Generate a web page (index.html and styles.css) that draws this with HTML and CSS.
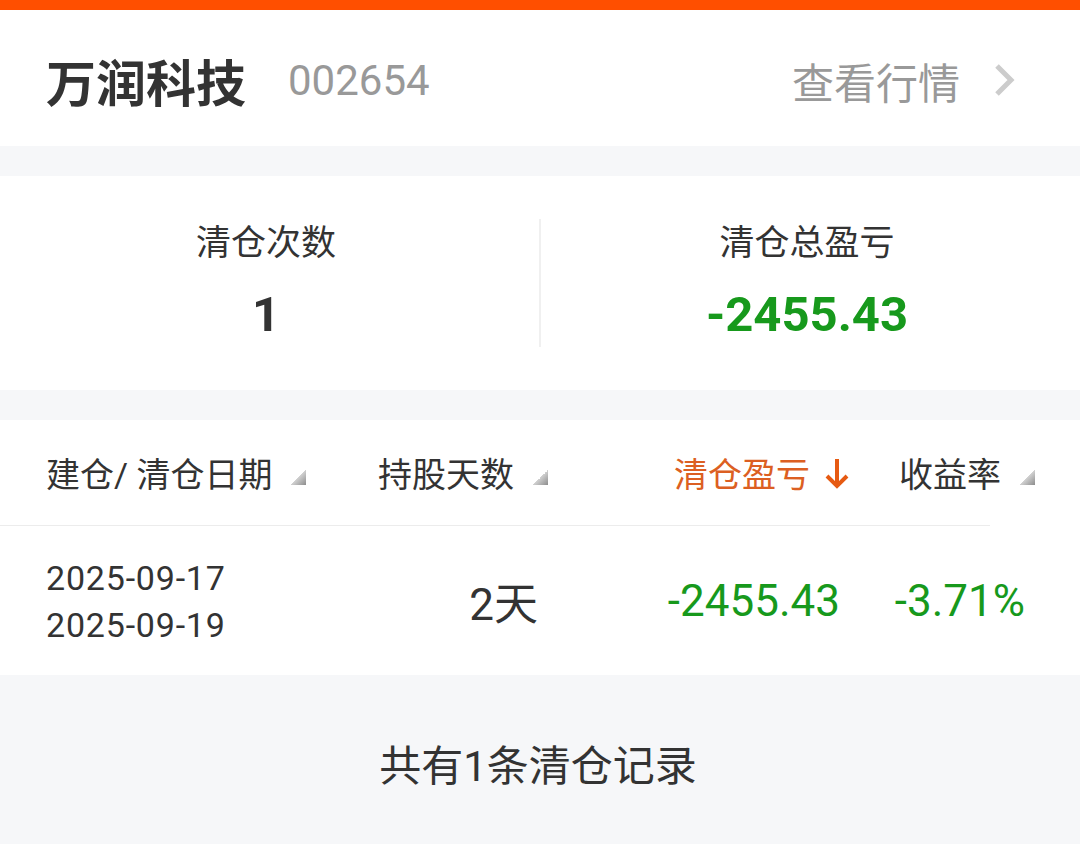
FILE: index.html
```html
<!DOCTYPE html>
<html>
    <head>
        <title>清仓记录</title>
        <meta charset="UTF-8">
        <link rel="stylesheet" href="styles.css">
    </head>
    <body>
        <div class="topbar"></div>
        <div class="head">
            <span class="name">万润科技</span>
            <span class="code">002654</span>
            <a class="more" href="#">
                查看行情
                <svg class="chev" width="26" height="36" viewBox="0 0 26 36">
                    <polyline points="5,4 19,18 5,32" fill="none" stroke="#cccccc" stroke-width="5"/>
                </svg>
            </a>
        </div>

        <div class="summary">
            <div class="stat">
                <div class="label">清仓次数</div>
                <div class="value">1</div>
            </div>
            <div class="stat">
                <div class="label">清仓总盈亏</div>
                <div class="value green">-2455.43</div>
            </div>
        </div>

        <div class="table">
            <div class="thead">
                <div class="th th-left">建仓/ 清仓日期<i class="sort"></i></div>
                <div class="th">持股天数<i class="sort"></i></div>
                <div class="th active">清仓盈亏
                    <svg class="arrow" width="26" height="32" viewBox="0 0 26 32">
                        <line x1="13" y1="2" x2="13" y2="29" stroke="#e65a12" stroke-width="4"/>
                        <polyline points="3,19 13,29 23,19" fill="none" stroke="#e65a12" stroke-width="4"/>
                    </svg>
                </div>
                <div class="th">收益率<i class="sort"></i></div>
            </div>
            <div class="line"></div>
            <div class="row">
                <div class="td dates">
                    <div>2025-09-17</div>
                    <div>2025-09-19</div>
                </div>
                <div class="td">2天</div>
                <div class="td green">-2455.43</div>
                <div class="td green">-3.71%</div>
            </div>
        </div>

        <div class="foot">共有1条清仓记录</div>
    </body>
</html>
```

FILE: styles.css
```css
* {
    margin: 0;
    padding: 0;
    box-sizing: border-box;
}

body {
    width: 1080px;
    background-color: #f6f7f9;
    font-family: Roboto, "Noto Sans CJK SC", sans-serif;
    color: #333;
}

.green {
    color: #17991c;
}

.topbar {
    height: 10px;
    background-color: #ff4f00;
}

/* 顶部股票名称 */
.head {
    height: 136px;
    display: flex;
    align-items: center;
    padding: 4px 62px 0 46px;
    background-color: #fff;
}

.head .name {
    font-size: 50px;
    font-weight: bold;
    color: #333;
}

.head .code {
    margin-left: 42px;
    font-size: 42px;
    color: #999;
}

.head .more {
    margin-left: auto;
    display: flex;
    align-items: center;
    font-size: 42px;
    color: #999;
    text-decoration: none;
}

.head .chev {
    margin-left: 32px;
}

/* 汇总 */
.summary {
    margin-top: 30px;
    height: 214px;
    display: flex;
    align-items: center;
    background-color: #fff;
}

.summary .stat {
    flex: 1;
    height: 128px;
    padding-right: 7px;
    text-align: center;
}

.summary .stat + .stat {
    border-left: 2px solid #f0f0f0;
}

.summary .label {
    line-height: 50px;
    font-size: 35px;
}

.summary .value {
    line-height: 92px;
    font-size: 49px;
    font-weight: bold;
}

/* 列表 */
.table {
    margin-top: 30px;
    background-color: #fff;
}

.thead,
.row {
    display: grid;
    grid-template-columns: 312px 190px 302px 185px;
    padding: 0 45px 0 46px;
    align-items: center;
}

.thead {
    height: 105px;
}

.th {
    display: flex;
    align-items: center;
    justify-content: flex-end;
    font-size: 34px;
    color: #333;
}

.th-left {
    justify-content: flex-start;
}

.th.active {
    color: #dc5f22;
}

.sort {
    width: 15px;
    height: 15px;
    margin: 10px 0 0 19px;
    background: linear-gradient(135deg, transparent 50%, #d0d0d0 50%, #8c8c8c 100%);
}

.arrow {
    margin-left: 14px;
}

.line {
    height: 1px;
    margin-right: 90px;
    background-color: #ececec;
}

.row {
    height: 149px;
}

.td {
    text-align: right;
    padding-right: 10px;
    font-size: 44px;
}

.dates {
    text-align: left;
    font-size: 34px;
    line-height: 47px;
    letter-spacing: 0.8px;
    padding-top: 2px;
}

.foot {
    height: 169px;
    padding-top: 67px;
    padding-right: 4px;
    line-height: 50px;
    text-align: center;
    font-size: 42px;
    color: #333;
}
```
